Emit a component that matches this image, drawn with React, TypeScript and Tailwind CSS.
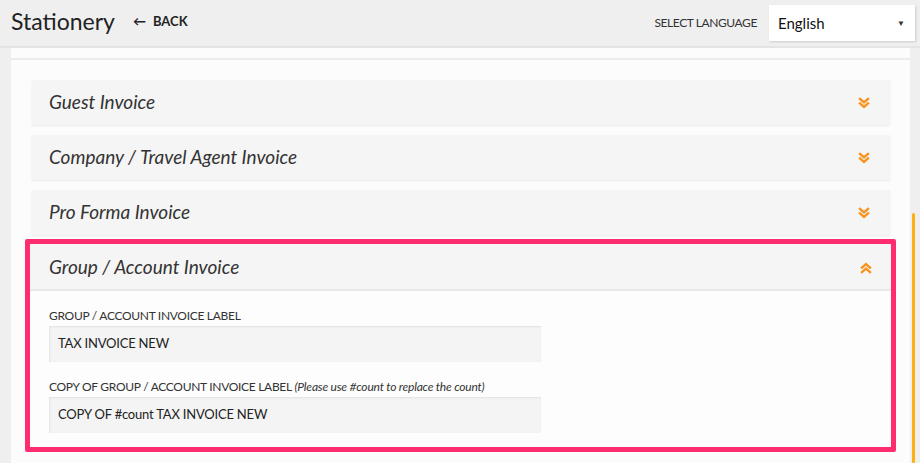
const font = { fontFamily: 'Lato, "Noto Sans", sans-serif' };

const ChevronsDown = ({ up = false }: { up?: boolean }) => (
  <svg
    width="12"
    height="12"
    viewBox="0 0 12 12"
    className={up ? 'rotate-180' : ''}
    fill="none"
    stroke="#f7931e"
    strokeWidth="2.4"
    strokeLinecap="square"
  >
    <path d="M2 2l4 3.5L10 2" />
    <path d="M2 6.5l4 3.5 4-3.5" />
  </svg>
);

const sections = ['Guest Invoice', 'Company / Travel Agent Invoice', 'Pro Forma Invoice'];

const Field = ({ label, hint, value }: { label: string; hint?: string; value: string }) => (
  <div className="flex flex-col">
    <label className="text-[12px] leading-[16px] tracking-[-0.3px] text-[#333] mb-[2px]">
      {label}
      {hint && <span className="italic tracking-[-0.2px]"> {hint}</span>}
    </label>
    <div className="w-[492px] h-[36px] bg-[#f4f4f4] shadow-[inset_1px_1px_2px_rgba(0,0,0,0.08)] flex items-center px-[9px] text-[13px] tracking-[-0.2px] text-[#222]">
      {value}
    </div>
  </div>
);

export default function App() {
  return (
    <div style={font} className="w-[920px] h-[463px] overflow-hidden bg-[#efefef] flex flex-col text-[#333]">
      <header className="h-[48px] shrink-0 border-b-2 border-[#e4e4e4] flex items-center pl-[11px] pr-[5px]">
        <h1 className="text-[23px] text-[#222] leading-none pb-[3px]">Stationery</h1>
        <button className="ml-[18px] flex items-center gap-[7px] text-[13px] font-bold text-[#222] pb-[2px]">
          <span className="text-[13px]">←</span>BACK
        </button>
        <div className="ml-auto flex items-center gap-[12px]">
          <span className="text-[12px] tracking-[-0.4px] text-[#333]">SELECT LANGUAGE</span>
          <div className="w-[146px] h-[36px] bg-white shadow-[1px_1px_2px_rgba(0,0,0,0.15)] flex items-center justify-between pl-[9px] pr-[10px] text-[15px] text-[#111]">
            English
            <span className="text-[8px] text-[#333]">▼</span>
          </div>
        </div>
      </header>

      <div className="flex flex-1 min-h-0">
        <div className="w-[11px] shrink-0" />
        <main className="flex-1 bg-[#fcfcfc] flex flex-col">
          <div className="h-[12px] border-b-2 border-[#ececec] shrink-0" />
          <div className="pt-[20px] pl-[21px] pr-[20px] flex flex-col">
            {sections.map((s) => (
              <div
                key={s}
                className="h-[45px] mb-[10px] bg-[#f5f5f5] shadow-[0_1px_2px_rgba(0,0,0,0.08)] flex items-center justify-between pl-[17px] pr-[20px]"
              >
                <span className="italic text-[19px] text-[#333]">{s}</span>
                <ChevronsDown />
              </div>
            ))}
            <div className="-mt-[6px] -ml-[7px] -mr-[6px] border-[5px] border-[#ff2d6f] bg-[#fdfdfd] rounded-[2px]">
              <div className="h-[47px] pt-[2px] bg-[#f5f5f5] border-b-2 border-[#e8e8e8] flex items-center justify-between pl-[19px] pr-[19px]">
                <span className="italic text-[19px] text-[#333]">Group / Account Invoice</span>
                <ChevronsDown up />
              </div>
              <div className="pl-[19px] pt-[17px] pb-[14px] flex flex-col gap-[17px]">
                <Field label="GROUP / ACCOUNT INVOICE LABEL" value="TAX INVOICE NEW" />
                <Field
                  label="COPY OF GROUP / ACCOUNT INVOICE LABEL"
                  hint="(Please use #count to replace the count)"
                  value="COPY OF #count TAX INVOICE NEW"
                />
              </div>
            </div>
          </div>
        </main>
        <div className="w-[10px] shrink-0 relative">
          <div className="absolute left-[2px] top-[165px] bottom-0 w-[3px] rounded-full bg-[#fdb012]" />
        </div>
      </div>
    </div>
  );
}
